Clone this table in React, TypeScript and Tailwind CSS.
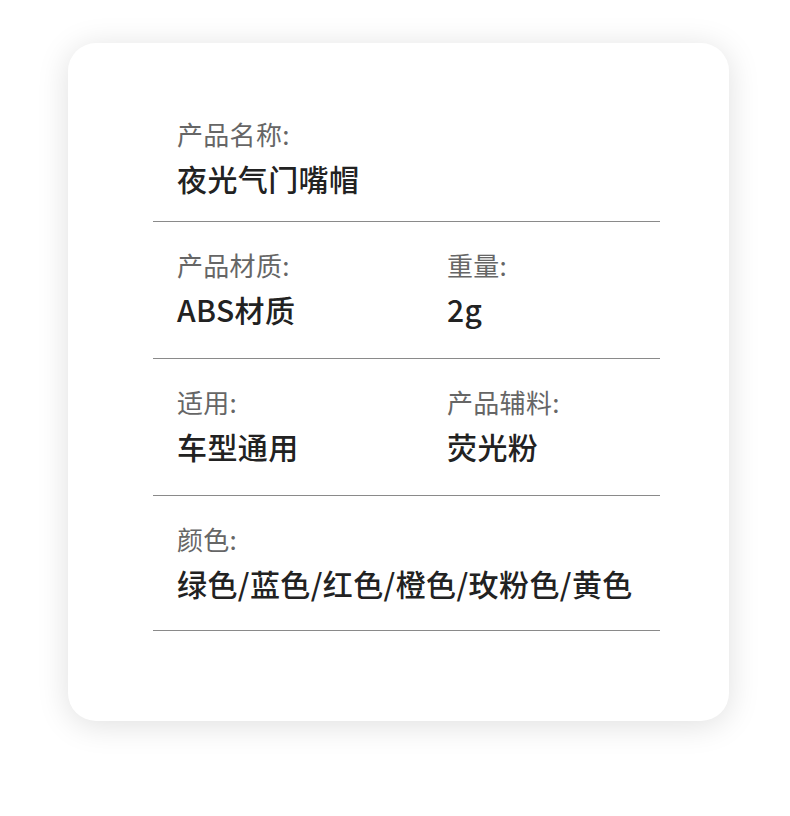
import React from "react";

const font = { fontFamily: '"Noto Sans CJK SC", "Noto Sans", sans-serif' };

function Field({ label, value }: { label: string; value: string }) {
  return (
    <div className="flex flex-col gap-[8px]">
      <div className="text-[26px] leading-[32px] text-[#666666] tracking-[0.3px]">{label}</div>
      <div className="text-[30px] leading-[40px] font-medium text-[#222222] whitespace-nowrap tracking-[0.4px]">{value}</div>
    </div>
  );
}

export default function App() {
  return (
    <div className="w-[790px] h-[816px] bg-white pt-[43px] pl-[68px]" style={font}>
      <div className="w-[661px] h-[678px] rounded-[28px] bg-white shadow-[0_4px_32px_rgba(0,0,0,0.13)] pl-[85px]">
        <div className="w-[507px] flex flex-col">
          <div className="pt-[75px] pb-[23px] pl-[24px] border-b border-[#8a8a8a]">
            <Field label="产品名称:" value="夜光气门嘴帽" />
          </div>
          <div className="pt-[27px] pb-[29px] pl-[24px] border-b border-[#8a8a8a] grid grid-cols-[270px_1fr]">
            <Field label="产品材质:" value="ABS材质" />
            <Field label="重量:" value="2g" />
          </div>
          <div className="pt-[27px] pb-[29px] pl-[24px] border-b border-[#8a8a8a] grid grid-cols-[270px_1fr]">
            <Field label="适用:" value="车型通用" />
            <Field label="产品辅料:" value="荧光粉" />
          </div>
          <div className="pt-[27px] pb-[27px] pl-[24px] border-b border-[#8a8a8a]">
            <Field label="颜色:" value="绿色/蓝色/红色/橙色/玫粉色/黄色" />
          </div>
        </div>
      </div>
    </div>
  );
}
